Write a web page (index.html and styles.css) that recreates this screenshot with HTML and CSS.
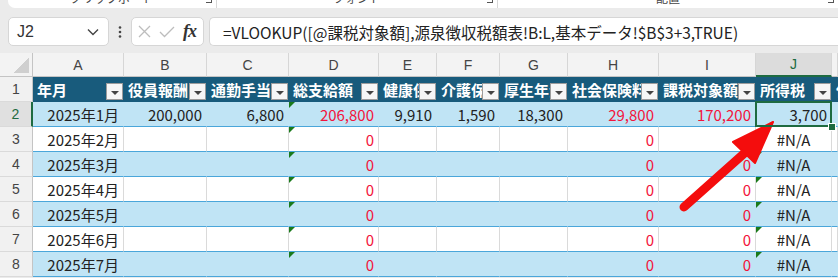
FILE: index.html
```html
<!DOCTYPE html>
<html lang="ja">
<head>
    <meta charset="UTF-8">
    <meta name="viewport" content="width=device-width, initial-scale=1.0">
    <title>源泉徴収 - Excel</title>
    <link rel="stylesheet" href="styles.css">
</head>
<body>
    <div class="ribbon">
        <div class="group g1"><span class="glabel">クリップボード</span><span class="launch"></span></div>
        <div class="group g2"><span class="glabel">フォント</span><span class="launch"></span></div>
        <div class="group g3"><span class="glabel">配置</span><span class="launch"></span></div>
    </div>

    <div class="formulabar">
        <div class="box namebox">
            <span>J2</span>
            <svg width="12" height="8" viewBox="0 0 12 8"><path d="M1 1.5 L6 6.5 L11 1.5" fill="none" stroke="#444" stroke-width="1.4"/></svg>
        </div>
        <div class="dots">
            <svg width="4" height="12" viewBox="0 0 4 12"><circle cx="2" cy="1.5" r="1.3" fill="#444"/><circle cx="2" cy="6" r="1.3" fill="#444"/><circle cx="2" cy="10.5" r="1.3" fill="#444"/></svg>
        </div>
        <div class="box fxbox">
            <svg width="13" height="13" viewBox="0 0 13 13"><path d="M1 1 L12 12 M12 1 L1 12" stroke="#bdbdbd" stroke-width="1.3"/></svg>
            <svg width="16" height="12" viewBox="0 0 16 12"><path d="M1 6 L5.5 10.5 L15 1" fill="none" stroke="#bdbdbd" stroke-width="1.3"/></svg>
            <i class="fx">fx</i>
        </div>
        <div class="box formula">=VLOOKUP([@課税対象額],源泉徴収税額表!B:L,基本データ!$B$3+3,TRUE)</div>
    </div>

    <div class="sheet">
        <div class="row colhead">
            <div class="corner"></div>
            <div>A</div><div>B</div><div>C</div><div>D</div><div>E</div><div>F</div>
            <div>G</div><div>H</div><div>I</div><div class="sel">J</div><div></div>
        </div>

        <div class="row thead">
            <div class="rh">1</div>
            <div class="th"><span>年月</span><i class="flt"></i></div>
            <div class="th"><span>役員報酬</span><i class="flt"></i></div>
            <div class="th"><span>通勤手当</span><i class="flt"></i></div>
            <div class="th"><span>総支給額</span><i class="flt"></i></div>
            <div class="th"><span>健康保険</span><i class="flt"></i></div>
            <div class="th"><span>介護保険</span><i class="flt"></i></div>
            <div class="th"><span>厚生年金</span><i class="flt"></i></div>
            <div class="th"><span>社会保険料</span><i class="flt"></i></div>
            <div class="th"><span>課税対象額</span><i class="flt"></i></div>
            <div class="th"><span>所得税</span><i class="flt"></i></div>
            <div class="th"><span>住民税</span></div>
        </div>

        <div class="row band">
            <div class="rh cur">2</div>
            <div class="num">2025年1月</div>
            <div class="num">200,000</div>
            <div class="num">6,800</div>
            <div class="num red err">206,800</div>
            <div class="num">9,910</div>
            <div class="num">1,590</div>
            <div class="num">18,300</div>
            <div class="num red">29,800</div>
            <div class="num red">170,200</div>
            <div class="num active">3,700</div>
            <div></div>
        </div>

        <div class="row">
            <div class="rh">3</div>
            <div class="num">2025年2月</div>
            <div></div><div></div>
            <div class="num red err">0</div>
            <div></div><div></div><div></div>
            <div class="num red">0</div>
            <div class="num red">0</div>
            <div class="na">#N/A</div>
            <div></div>
        </div>

        <div class="row band">
            <div class="rh">4</div>
            <div class="num">2025年3月</div>
            <div></div><div></div>
            <div class="num red err">0</div>
            <div></div><div></div><div></div>
            <div class="num red">0</div>
            <div class="num red">0</div>
            <div class="na err">#N/A</div>
            <div></div>
        </div>

        <div class="row">
            <div class="rh">5</div>
            <div class="num">2025年4月</div>
            <div></div><div></div>
            <div class="num red err">0</div>
            <div></div><div></div><div></div>
            <div class="num red">0</div>
            <div class="num red">0</div>
            <div class="na err">#N/A</div>
            <div></div>
        </div>

        <div class="row band">
            <div class="rh">6</div>
            <div class="num">2025年5月</div>
            <div></div><div></div>
            <div class="num red err">0</div>
            <div></div><div></div><div></div>
            <div class="num red">0</div>
            <div class="num red">0</div>
            <div class="na err">#N/A</div>
            <div></div>
        </div>

        <div class="row">
            <div class="rh">7</div>
            <div class="num">2025年6月</div>
            <div></div><div></div>
            <div class="num red err">0</div>
            <div></div><div></div><div></div>
            <div class="num red">0</div>
            <div class="num red">0</div>
            <div class="na err">#N/A</div>
            <div></div>
        </div>

        <div class="row band">
            <div class="rh">8</div>
            <div class="num">2025年7月</div>
            <div></div><div></div>
            <div class="num red err">0</div>
            <div></div><div></div><div></div>
            <div class="num red">0</div>
            <div class="num red">0</div>
            <div class="na err">#N/A</div>
            <div></div>
        </div>
    </div>

    <!-- red callout arrow pointing at J2 -->
    <svg class="arrow" width="838" height="278" viewBox="0 0 838 278">
        <line x1="684" y1="207" x2="748" y2="150" stroke="#f40d0d" stroke-width="9" stroke-linecap="round"/>
        <polygon points="773,122 733,142 755,163" fill="#f40d0d" stroke="#f40d0d" stroke-width="2" stroke-linejoin="round"/>
    </svg>
</body>
</html>
```

FILE: styles.css
```css
body {
    margin: 0;
    width: 838px;
    height: 278px;
    overflow: hidden;
    background: #ebebeb;
    font-family: "Noto Sans CJK JP", "Noto Sans", sans-serif;
    color: #222;
}

/* ribbon bottom edge */
.ribbon {
    display: flex;
    height: 8px;
    margin-left: 8px;
    background: #fff;
    border-radius: 0 0 0 7px;
    overflow: hidden;
}
.group {
    display: flex;
    justify-content: center;
    position: relative;
    border-right: 1px solid #d8d8d8;
    box-sizing: border-box;
}
.g1 { width: 209px; }
.g2 { width: 281px; }
.g3 { flex: 1; border-right: none; }
.glabel {
    font-size: 12px;
    line-height: 12px;
    margin-top: -8px;
    color: #444;
}
.launch {
    position: absolute;
    right: 4px;
    top: -3px;
    width: 5px;
    height: 5px;
    border-right: 1px solid #555;
    border-bottom: 1px solid #555;
}

/* formula bar */
.formulabar {
    display: flex;
    height: 45px;
    padding: 9px 0 0 8px;
    box-sizing: border-box;
}
.box {
    height: 29px;
    box-sizing: border-box;
    background: #fff;
    border: 1px solid #d6d6d6;
    border-radius: 5px;
    display: flex;
    align-items: center;
}
.namebox {
    width: 101px;
    padding: 0 9px 0 8px;
    justify-content: space-between;
    font-family: "Liberation Sans", sans-serif;
    font-size: 16px;
    color: #333;
}
.dots {
    width: 22px;
    display: flex;
    justify-content: center;
    align-items: center;
    height: 29px;
}
.fxbox {
    width: 73px;
    padding: 0 5px 0 6px;
    justify-content: space-between;
}
.fx {
    font-family: "Liberation Serif", serif;
    font-weight: bold;
    font-size: 18px;
    color: #333;
    letter-spacing: -1px;
    padding-right: 2px;
}
.formula {
    flex: 1;
    margin-left: 5px;
    border-right: none;
    border-radius: 5px 0 0 5px;
    padding-left: 13px;
    font-size: 15.5px;
    color: #222;
    white-space: nowrap;
}

/* grid */
.sheet {
    background: #fff;
}
.row {
    display: grid;
    grid-template-columns: 33px 91px 83px 82px 90px 58px 63px 68px 91px 97px 76px 1fr;
    height: 25px;
}
.row > div {
    box-sizing: border-box;
    border-right: 1px solid #dadada;
    border-bottom: 1px solid #4aa6da;
    font-size: 15px;
    display: flex;
    align-items: center;
    white-space: nowrap;
}
.row.band {
    background: #c0e4f5;
}
.row.band > div {
    border-right-color: #c0e4f5;
}
.row > .rh,
.row.band > .rh {
    background: #f1f1f1;
    border-right: 1px solid #c4c4c4;
    border-bottom: 1px solid #dadada;
    justify-content: center;
    font-family: "Liberation Sans", sans-serif;
    font-size: 14px;
    color: #444;
}
.row > .rh.cur {
    background: #e0e0e0;
    border-right: 2px solid #1e6b41;
    color: #1e6b41;
}

.colhead {
    height: 24px;
    background: #f3f3f3;
}
.colhead > div {
    justify-content: center;
    border-right-color: #d6d6d6;
    border-bottom-color: #c4c4c4;
    font-family: "Liberation Sans", sans-serif;
    font-size: 14px !important;
    color: #444;
}
.colhead > .sel {
    background: #dcdcdc;
    color: #1e6b41;
    border-bottom: 2px solid #1e6b41;
}
.colhead > .corner {
    position: relative;
    border-right-color: #c4c4c4;
}
.corner::after {
    content: "";
    position: absolute;
    right: 3px;
    bottom: 3px;
    width: 15px;
    height: 15px;
    background: linear-gradient(to bottom right, transparent 50%, #cfcfcf 50%);
}

/* table header row */
.thead {
    background: #185b7c;
}
.thead > .th {
    border-right-color: #185b7c;
    border-bottom-color: #185b7c;
    color: #fff;
    font-weight: bold;
    align-items: stretch;
}
.th span {
    flex: 1;
    overflow: hidden;
    padding-left: 4px;
    display: flex;
    align-items: center;
}
.flt {
    flex: none;
    align-self: flex-end;
    width: 17px;
    height: 17px;
    margin-bottom: 1px;
    box-sizing: border-box;
    border: 1px solid #9c9c9c;
    background: #f6f6f6;
    display: flex;
    align-items: center;
    justify-content: center;
}
.flt::after {
    content: "";
    border-top: 4px solid #444;
    border-left: 4px solid transparent;
    border-right: 4px solid transparent;
    margin-top: 2px;
}

/* data cells */
.num {
    justify-content: flex-end;
    padding-right: 4px;
}
.na {
    justify-content: center;
}
.red {
    color: #f3143c;
}
.err {
    position: relative;
}
.err::before {
    content: "";
    position: absolute;
    left: 0;
    top: 0;
    border-top: 6px solid #1a7a1a;
    border-right: 6px solid transparent;
}
.active {
    position: relative;
}
.active::after {
    content: "";
    position: absolute;
    left: -1px;
    top: -1px;
    right: -1px;
    bottom: -1px;
    border: 2px solid #1e6b41;
    z-index: 2;
}
.active::before {
    content: "";
    position: absolute;
    right: -5px;
    bottom: -5px;
    width: 6px;
    height: 6px;
    background: #1e6b41;
    border: 1px solid #fff;
    z-index: 3;
}

.arrow {
    position: absolute;
    left: 0;
    top: 0;
    pointer-events: none;
}
```
